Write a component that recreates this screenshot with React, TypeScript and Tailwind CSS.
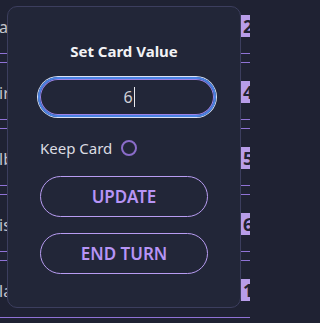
const rows = [
  { text: "a", value: "2" },
  { text: "ir", value: "4" },
  { text: "lb", value: "5" },
  { text: "is", value: "6" },
  { text: "la", value: "10" },
];

const App = () => {
  return (
    <div className="min-h-screen w-full bg-[#1f2233]">
      <div
        className="relative h-[323px] w-[250px] overflow-hidden bg-[#1f2233]"
        style={{ fontFamily: '"Noto Sans", sans-serif' }}
      >
        {/* Background card list */}
        <div className="-mt-[4px] flex flex-col gap-[8px]">
          {rows.map((row) => (
            <div
              key={row.value}
              className="flex h-[58px] items-center justify-between border-y border-[#8f72d6]"
            >
              <span className="-ml-[1px] mt-[3px] text-[16px] text-[#c4c4cc]">{row.text}</span>
              <span className="mr-[-24px] mt-[2px] flex h-[22px] w-[33px] items-center whitespace-nowrap bg-[#b89de9] pl-[2px] text-[18px] font-bold leading-none text-[#1f2233]">
                {row.value}
              </span>
            </div>
          ))}
        </div>

        {/* Dialog */}
        <div className="absolute left-[7px] top-[6px] flex h-[302px] w-[234px] flex-col rounded-[10px] border border-[#3c3e5e] bg-[#222638] pl-[32px] pt-[34px]">
          <div className="-ml-[32px] text-center text-[15px] font-bold leading-[20px] text-[#f2f2f5]">
            Set Card Value
          </div>
          <div className="-ml-[2px] mt-[16px] flex h-[40px] w-[178px] items-center justify-center rounded-full border-2 border-[#4a82e4] pl-[4px] text-[16px] text-[#cfcfd6] shadow-[0_0_0_1px_#d9e2f5,inset_0_0_0_1px_#9d82e6]">
            6<span className="ml-[1px] h-[20px] w-[1px] bg-[#e8e8ee]" />
          </div>
          <div className="mt-[19px] flex h-[24px] items-center">
            <span className="text-[15px] text-[#dcdce2]">Keep Card</span>
            <span className="ml-[9px] h-[16px] w-[16px] rounded-full border-2 border-[#8a6cc9]" />
          </div>
          <button className="mt-[16px] h-[41px] w-[168px] rounded-full border border-[#b89cf2] text-[17px] font-semibold text-[#b794f6]">
            UPDATE
          </button>
          <button className="mt-[16px] h-[41px] w-[168px] rounded-full border border-[#b89cf2] text-[17px] font-semibold text-[#b794f6]">
            END TURN
          </button>
        </div>
      </div>
    </div>
  );
};

export default App;
